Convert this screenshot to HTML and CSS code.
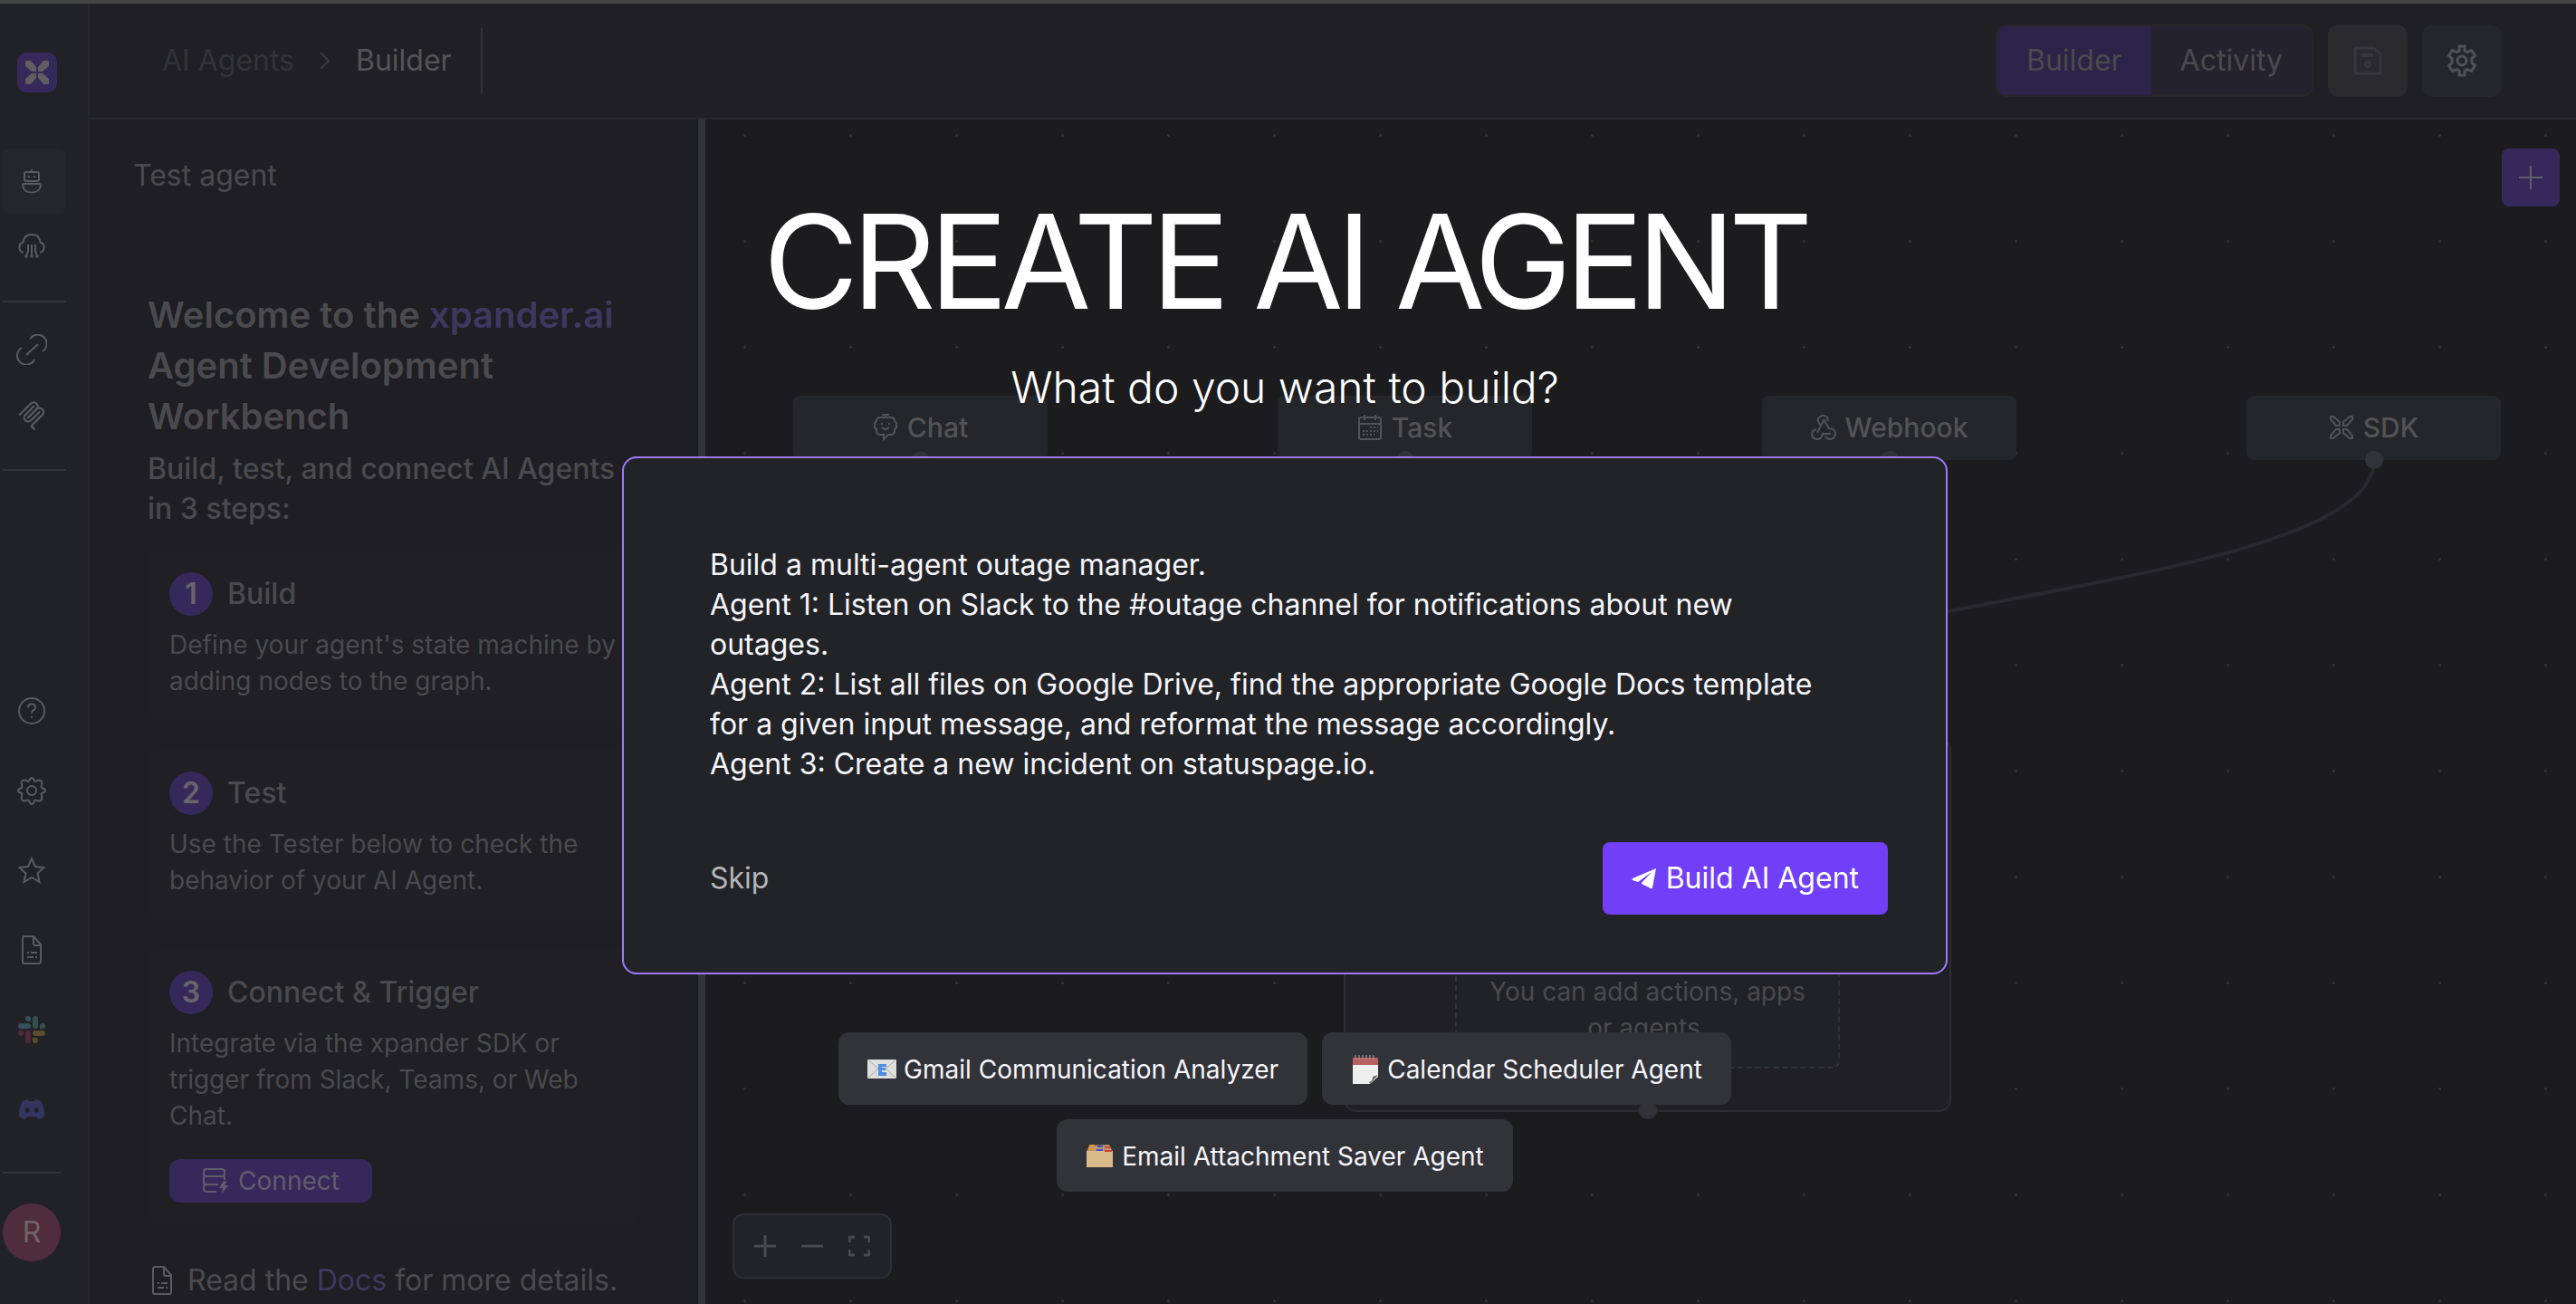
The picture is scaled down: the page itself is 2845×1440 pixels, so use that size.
FILE: index.html
```html
<!DOCTYPE html>
<html lang="en">
<head>
<meta charset="utf-8">
<title>xpander.ai – Builder</title>
<link rel="stylesheet" href="styles.css">
</head>
<body>
<svg class="defs" aria-hidden="true">
  <symbol id="i-doc" viewBox="0 0 24 32"><path d="M4 1h10l8 9v19a2 2 0 0 1-2 2H4a2 2 0 0 1-2-2V3a2 2 0 0 1 2-2zM14 1v8a2 2 0 0 0 2 2h6"/><path d="M7 19h2M11 19h7M7 24h7M16 24h2"/></symbol>
  <symbol id="i-plus" viewBox="0 0 24 24"><path d="M12 0v24M0 12h24"/></symbol>
</svg>

<div class="app">
  <nav class="sidebar" aria-label="Main">
    <a class="logo" href="#" aria-label="Home"><svg width="26" height="26" viewBox="0 0 26 26"><path d="M1 0h5l6 7v5H7L0 6V1q0-1 1-1zM25 0h-5l-6 7v5h5l7-6V1q0-1-1-1zM1 26h5l6-7v-5H7l-7 6v5q0 1 1 1zM25 26h-5l-6-7v-5h5l7 6v5q0 1-1 1z" fill="#5f5f62"/></svg></a>
    <div class="side-group">
      <a class="side-item active" href="#" aria-label="Agents"><svg class="ico" width="24" height="28" viewBox="0 0 24 28"><rect x="4" y="4" width="16" height="10" rx="2"/><path d="M12 1v3M9 8v2M15 8v2M4 17h16q2 0 2 1.500-1 8-10 8t-10-8Q2 17 4 17z"/></svg></a>
      <a class="side-item" href="#" aria-label="Cloud"><svg class="ico" width="34" height="30" viewBox="0 0 34 30"><path d="M8 22a6 6 0 0 1-.500-11.500q1-8.500 9.500-8.500t9.500 8.500A6 6 0 0 1 26 22M13 13v7l-2 6M17 13v13M21 13v7l2 6"/><path d="M9.500 26h3M15.500 26h3M21.500 26h3" stroke-width="3"/></svg></a>
    </div>
    <div class="side-group ruled">
      <a class="side-item" href="#" aria-label="Connectors"><svg class="ico" width="34" height="34" viewBox="0 0 34 34"><path d="M15 5.500A10 10 0 1 1 29 19M6 15a10 10 0 1 0 14 13M11 23 24 11"/></svg></a>
      <a class="side-item" href="#" aria-label="MCP"><svg class="ico mcp" width="36" height="36" viewBox="0 0 195 195"><path d="M25 97.850 92.880 29.970c9.370-9.370 24.570-9.370 33.940 0s9.370 24.570 0 33.940L75.560 115.180M76.270 114.470l50.550-50.560c9.380-9.370 24.570-9.370 33.950 0l.350.360c9.370 9.370 9.370 24.560 0 33.940L99.720 159.600c-3.120 3.120-3.120 8.190 0 11.310l12.610 12.610M109.850 46.940 59.650 97.150c-9.370 9.370-9.370 24.560 0 33.940s24.570 9.370 33.940 0l50.200-50.210"/></svg></a>
    </div>
    <div class="side-rule"></div>
    <div class="side-bottom">
      <a class="side-link" href="#" aria-label="Help"><svg class="ico" width="32" height="32" viewBox="0 0 32 32"><circle cx="16" cy="16" r="14"/><path d="M12 12.500q0-4 4-4t4 3.500q0 2.500-2.500 3.500-1.500 1-1.500 3M16 22v2"/></svg></a>
      <a class="side-link" href="#" aria-label="Settings"><svg class="ico" width="32" height="32" viewBox="0 0 32 32"><path d="M16 2q2 0 3 3.500 1 1 3-.500 3-1 4.500.500t.500 4.500q-1 2 0 3 4 1 4 3t-4 3q-1 1 0 3 1 3-.500 4.500t-4.500.500q-2-1-3 0-1 4-3 4t-3-4q-1-1-3 0-3 1-4.500-.500T5 22q1-2 0-3-4-1-4-3t4-3q1-1 0-3-1-3 .500-4.500T10 5q2 1.500 3 .500Q14 2 16 2z"/><circle cx="16" cy="16" r="5"/></svg></a>
      <a class="side-link" href="#" aria-label="Favorites"><svg class="ico" width="32" height="32" viewBox="0 0 32 32"><path d="m16 3 4 9 9.500 1-7 6.500 2 9.500-8.500-5-8.500 5 2-9.500-7-6.500 9.500-1z"/></svg></a>
      <a class="side-link" href="#" aria-label="Documents"><svg class="ico" width="24" height="32"><use href="#i-doc"/></svg></a>
      <a class="side-link" href="#" aria-label="Slack"><svg width="32" height="32" viewBox="0 0 32 32"><g fill="#354f5c"><rect x="1" y="9" width="14" height="6" rx="3"/><path d="M15 7h-3a3 3 0 1 1 3-3z"/></g><g fill="#34504a"><rect x="17" y="1" width="6" height="14" rx="3"/><path d="M25 15v-3a3 3 0 1 1 3 3z"/></g><g fill="#5c4c2f"><rect x="17" y="17" width="14" height="6" rx="3"/><path d="M17 25h3a3 3 0 1 1-3 3z"/></g><g fill="#512a3a"><rect x="9" y="17" width="6" height="14" rx="3"/><path d="M7 17v3a3 3 0 1 1-3-3z"/></g></svg></a>
      <a class="side-link" href="#" aria-label="Discord"><svg width="30" height="24" viewBox="0 0 30 24"><path fill="#33355f" fill-rule="evenodd" d="M5 3q3-2 6-2l1 2h6l1-2q3 0 6 2 5 9 4 17-4 3-7 3l-2-3H10l-2 3q-3 0-7-3Q0 12 5 3zM10 10a2.500 3 0 1 0 .1 0zM20 10a2.500 3 0 1 0 .1 0z"/></svg></a>
    </div>
    <button class="avatar" type="button">R</button>
  </nav>

  <div class="main">
    <header class="topbar">
      <div class="crumbs">
        <a class="crumb-parent" href="#">AI Agents</a>
        <svg class="crumb-sep" width="14" height="20" viewBox="0 0 14 20"><path d="m2 1 9 9-9 9"/></svg>
        <span class="crumb-current">Builder</span>
        <span class="crumb-bar"></span>
      </div>
      <div class="actions">
        <div class="tabs"><button class="tab on" type="button">Builder</button><button class="tab" type="button">Activity</button></div>
        <button class="square save" type="button" aria-label="Save"><svg width="32" height="32" viewBox="0 0 32 32"><path d="M4 2h19l7 7v19a2 2 0 0 1-2 2H4a2 2 0 0 1-2-2V4a2 2 0 0 1 2-2z"/><path d="M8 10h14" stroke-width="4"/><circle cx="16" cy="20" r="2.500"/></svg></button>
        <button class="square gear" type="button" aria-label="Settings"><svg width="36" height="36" viewBox="0 0 36 36"><path d="M15 2h6v5l3 1.500 4.500-2 4 6L29 15.500v5l3.500 3-4 6-4.500-2L21 29v5h-6v-5l-3-1.500-4.500 2-4-6L7 20.500v-5l-3.500-3 4-6 4.500 2L15 7z"/><circle cx="18" cy="18" r="5"/></svg></button>
      </div>
    </header>

    <div class="work">
      <section class="tester">
        <h2 class="tester-title">Test agent</h2>
        <div class="welcome">
          <h1>Welcome to the <a href="#">xpander.ai</a> Agent Development Workbench</h1>
          <h3>Build, test, and connect AI Agents in 3 steps:</h3>
          <ol class="steps">
            <li class="step"><div class="step-head"><span class="num">1</span><strong>Build</strong></div><p>Define your agent's state machine by adding nodes to the graph.</p></li>
            <li class="step"><div class="step-head"><span class="num">2</span><strong>Test</strong></div><p>Use the Tester below to check the behavior of your AI Agent.</p></li>
            <li class="step"><div class="step-head"><span class="num">3</span><strong>Connect &amp; Trigger</strong></div><p>Integrate via the xpander SDK or trigger from Slack, Teams, or Web Chat.</p>
              <button class="connect" type="button"><svg width="30" height="30" viewBox="0 0 30 30"><g fill="none" stroke="#605d6b" stroke-width="2"><rect x="2" y="2" width="23" height="8" rx="3"/><path d="M4 10q-2 0-2 2v4q0 3 3 3h13M25 14v-2q0-2-2-2M4 19q-2 0-2 3v2q0 3 3 3h11"/></g><path fill="#605d6b" d="m24 15-5 8h4l-1 6 7-9h-4l2-5z"/></svg>Connect</button></li>
          </ol>
          <p class="docs"><svg class="ico" width="24" height="32"><use href="#i-doc"/></svg><span>Read the <a href="#">Docs</a> for more details.</span></p>
        </div>
      </section>

      <section class="canvas">
        <svg class="edges" aria-hidden="true"><path d="M1843 376C1843 530 1041 530 1041 683"/></svg>
        <div class="node n-chat"><svg width="28" height="30" viewBox="0 0 28 30"><path d="M14 1v3M10 1h8M8 4h12q4 0 4 4l2 2v5l-2 2v2q0 4-4 4h-3l-5 5v-5H8q-4 0-4-4v-2l-2-2v-5l2-2q0-4 4-4zM10 10v2M18 10v2M10 15q4 4 8 0"/></svg>Chat</div>
        <div class="node n-task"><svg width="28" height="30" viewBox="0 0 28 30"><rect x="2" y="4" width="24" height="24" rx="2"/><path d="M2 11h24M8 1v6M20 1v6"/><path d="M14 15h9M6 19h17M6 23h13" stroke-dasharray="2 2"/></svg>Task</div>
        <div class="node n-hook"><svg width="28" height="30" viewBox="0 0 28 30"><path d="M10 12Q6 7 9 4q4-4 8-1 2 2 2 5M14 6l6 10q6 0 7 5 0 6-5 7-4 0-6-3M6 17q-5 1-5 6 1 5 6 5t6-6h9M14 7l-7 14"/></svg>Webhook</div>
        <div class="node n-sdk"><svg width="28" height="30" viewBox="0 0 28 30"><path d="M2 3h3l7 6v4H8L2 6zM26 3h-3l-7 6v4h4l6-7zM2 27h3l7-6v-4H8l-6 7zM26 27h-3l-7-6v-4h4l6 7z"/></svg>SDK</div>
        <div class="agent"><div class="drop">You can add actions, apps or agents.</div></div>
        <button class="add" type="button" aria-label="Add node"><svg width="26" height="26"><use href="#i-plus"/></svg></button>
        <div class="zoom">
          <button type="button" aria-label="Zoom in"><svg width="24" height="24"><use href="#i-plus"/></svg></button>
          <button type="button" aria-label="Zoom out"><svg width="24" height="24" viewBox="0 0 24 24"><path d="M0 12h24"/></svg></button>
          <button type="button" aria-label="Fit view"><svg width="24" height="24" viewBox="0 0 24 24"><path d="M1 8V4q0-2 2-2h4M17 2h4q2 0 2 2v4M23 16v4q0 2-2 2h-4M7 22H3q-2 0-2-2v-4"/></svg></button>
        </div>
      </section>
    </div>
  </div>
</div>

<div class="overlay" role="dialog" aria-labelledby="dlg-title">
  <h1 id="dlg-title">CREATE AI AGENT</h1>
  <label class="lead" for="prompt">What do you want to build?</label>
  <form class="card">
    <textarea id="prompt" rows="6" spellcheck="false">Build a multi-agent outage manager.
Agent 1: Listen on Slack to the #outage channel for notifications about new outages.
Agent 2: List all files on Google Drive, find the appropriate Google Docs template for a given input message, and reformat the message accordingly.
Agent 3: Create a new incident on statuspage.io.</textarea>
    <div class="card-foot">
      <button class="skip" type="button">Skip</button>
      <button class="build" type="button"><svg width="28" height="24" viewBox="0 0 28 24"><path fill="#fff" d="M27 1 1 12q-1 1 0 2l6 2L22 5 11 17v1l10 5q2 1 2-1z"/></svg>Build AI Agent</button>
    </div>
  </form>
  <div class="chips">
    <button class="chip" type="button"><svg width="32" height="24" viewBox="0 0 32 24"><rect y="1" width="32" height="21" fill="#dedede"/><path d="m0 1 12 10L0 22M32 1 20 11l12 11" fill="none" stroke="#aaa"/><path d="M12 6h9v3h-5v1h4v3h-4v2h5v4h-9z" fill="#4d8fe0"/></svg>Gmail Communication Analyzer</button>
    <button class="chip" type="button"><svg width="32" height="32" viewBox="0 0 32 32"><path fill="#eee" d="M2 4h28v20l-9 8H2z"/><path fill="#b9605e" d="M2 3h28v8H2z"/><path fill="#666" d="m30 22-9 10-1-2q5-2 4-6z"/><path d="M5 0v5M9 0v5M13 0v5M17 0v5M21 0v5M25 0v5" stroke="#aaa"/></svg>Calendar Scheduler Agent</button>
    <button class="chip" type="button"><svg width="32" height="32" viewBox="0 0 32 32"><path fill="#b8986b" d="m4 4 22-1 4 8H1z"/><path fill="#dab98a" d="M1 10h29v18H1z"/><path fill="#e8913a" d="M4 3h6v2H4zM3 7h7v2H3z"/><path fill="#3f51d0" d="M13 4h6v2h-6zM12 8h7v2h-7z"/><path fill="#d6403a" d="M21 5h6v2h-6zM21 9h8v2h-8z"/></svg>Email Attachment Saver Agent</button>
  </div>
</div>
</body>
</html>
```
FILE: styles.css
```css
* { box-sizing: border-box; }
body {
  margin: 0;
  background: #1c1c1e;
  color: #4a4a4e;
  font-family: Inter, "Liberation Sans", sans-serif;
  font-size: 32px;
  line-height: 44px;
}
h1, h2, h3, p, ol { margin: 0; padding: 0; }
button { margin: 0; padding: 0; border: 0; background: none; color: inherit; font: inherit; }
a { color: #3e3860; text-decoration: none; }
svg { display: block; flex: none; }
.defs { position: absolute; width: 0; height: 0; }
.ico { fill: none; stroke: #5b5b5e; stroke-width: 2; }
.mcp { stroke-width: 12; stroke-linecap: round; }

.app { display: flex; height: 100vh; overflow: hidden; border-top: 4px solid #444442; }

/* Sidebar */
.sidebar {
  display: flex;
  flex-direction: column;
  flex: none;
  width: 99px;
  padding: 54px 0 47px 3px;
  background: #212226;
  border-right: 2px solid #26262b;
}
.logo {
  display: grid;
  place-items: center;
  width: 44px;
  height: 44px;
  margin: 0 0 62px 16px;
  border-radius: 10px;
  background: #35295b;
}
.side-group { display: flex; flex-direction: column; width: 70px; }
.side-item { display: grid; place-items: center; height: 72px; padding-right: 6px; border-radius: 8px; }
.side-item.active { background: #25262a; }
.ruled { margin: 24px 0 8px; padding-top: 16px; border-top: 2px solid #323338; }
.side-rule { width: 70px; height: 2px; margin-top: 16px; background: #323338; }
.side-bottom {
  display: flex;
  flex-direction: column;
  width: 64px;
  margin-top: auto;
  padding-bottom: 25px;
  border-bottom: 2px solid #323338;
}
.side-link { display: grid; place-items: center; height: 88px; }
.avatar {
  width: 64px;
  height: 64px;
  margin-top: 33px;
  border-radius: 50%;
  background: #502d3b;
  color: #6f6468;
}

/* Top bar */
.main { display: flex; flex-direction: column; flex: 1; min-width: 0; }
.topbar {
  display: flex;
  align-items: center;
  justify-content: space-between;
  flex: none;
  height: 128px;
  padding: 0 82px 0 80px;
  background: #201f24;
  border-bottom: 2px solid #26272b;
}
.crumbs { display: flex; align-items: center; }
.crumb-parent { color: #323338; }
.crumb-sep { margin: 0 27px; fill: none; stroke: #3a3a3f; stroke-width: 2; }
.crumb-current { color: #545458; }
.crumb-bar { width: 2px; height: 72px; margin-left: 32px; background: #323338; }
.actions { display: flex; gap: 16px; }
.tabs { display: flex; overflow: hidden; height: 80px; border: 2px solid #26262b; border-radius: 12px; background: #24222c; }
.tab { padding: 0 32px; }
.tab.on { background: #2c2448; }
.square { display: grid; place-items: center; width: 88px; height: 80px; border-radius: 12px; }
.square svg { fill: none; stroke-width: 3; }
.save { background: #2a2a2d; }
.save svg { stroke: #37373b; }
.gear { background: #242629; }
.gear svg { stroke: #515154; }

/* Tester panel */
.work { display: flex; flex: 1; min-height: 0; }
.tester {
  flex: none;
  width: 680px;
  overflow: hidden;
  padding: 40px 0 0 48px;
  background: #1f1e23;
  border-right: 8px solid #333439;
}
.tester-title { font-size: 32px; font-weight: 400; }
.welcome { width: 544px; margin: 104px 0 0 16px; }
.welcome h1 { font-size: 40px; font-weight: 600; line-height: 56px; }
.welcome h3 { width: 530px; margin-top: 8px; font-size: 32px; font-weight: 500; }
.steps { display: flex; flex-direction: column; gap: 32px; margin-top: 24px; list-style: none; }
.step { padding: 24px; border-radius: 12px; background: #201f24; font-size: 28px; line-height: 40px; }
.step p { width: 500px; margin-top: 12px; }
.step-head { display: flex; align-items: center; gap: 16px; font-size: 32px; }
.step-head strong { font-weight: 500; }
.num {
  width: 48px;
  border-radius: 50%;
  background: #35295b;
  color: #66666a;
  font-weight: 600;
  line-height: 48px;
  text-align: center;
}
.connect {
  display: flex;
  align-items: center;
  justify-content: center;
  gap: 10px;
  width: 224px;
  height: 48px;
  margin-top: 28px;
  border-radius: 12px;
  background: #35295b;
  color: #605d6b;
}
.docs { display: flex; align-items: center; gap: 16px; margin-top: 40px; padding-left: 4px; white-space: nowrap; }

/* Canvas */
.canvas {
  position: relative;
  flex: 1;
  overflow: hidden;
  background: radial-gradient(circle, #323236 0 1px, transparent 2px) -15px -41px / 117px 117px;
}
.edges { position: absolute; inset: 0; width: 100%; height: 100%; fill: none; stroke: #29292d; stroke-width: 4; }
.node {
  position: absolute;
  top: 305px;
  display: flex;
  align-items: center;
  justify-content: center;
  gap: 10px;
  width: 281px;
  height: 71px;
  padding-bottom: 2px;
  border-radius: 8px;
  background: #25262a;
  color: #535356;
  font-size: 30px;
  font-weight: 500;
}
.node svg { fill: none; stroke: #535356; stroke-width: 2; }
.node::after, .agent::after {
  content: "";
  position: absolute;
  bottom: -10px;
  left: calc(50% - 10px);
  width: 20px;
  height: 20px;
  border-radius: 50%;
  background: #323338;
}
.n-chat { left: 97px; }
.n-task { left: 632px; }
.n-hook { left: 1167px; }
.n-sdk { left: 1702px; }
.agent {
  position: absolute;
  top: 683px;
  left: 705px;
  display: flex;
  width: 671px;
  height: 413px;
  padding: 60px 121px 46px;
  border: 2px solid #2d2c31;
  border-radius: 14px;
  background: #201f24;
}
.drop {
  display: flex;
  align-items: flex-end;
  justify-content: center;
  padding: 0 32px 23px;
  border: 2px dashed #323236;
  border-radius: 8px;
  background: #212226;
  color: #4a4a4e;
  font-size: 28px;
  line-height: 40px;
  text-align: center;
}
.add {
  position: absolute;
  top: 32px;
  right: 18px;
  display: grid;
  place-items: center;
  width: 64px;
  height: 64px;
  border-radius: 8px;
  background: #35295b;
}
.add svg { stroke: #5f5d69; stroke-width: 2; }
.zoom {
  position: absolute;
  bottom: 28px;
  left: 30px;
  display: flex;
  align-items: center;
  gap: 28px;
  height: 72px;
  padding: 0 22px;
  border: 2px solid #2d2e33;
  border-radius: 12px;
  background: #222327;
}
.zoom svg { fill: none; stroke: #4a4a4e; stroke-width: 3; }

/* Create dialog */
.overlay {
  position: absolute;
  inset: 0;
  display: flex;
  flex-direction: column;
  align-items: center;
  padding: 202px 7px 0 0;
  color: #fff;
}
.overlay h1 { font-size: 144px; font-weight: 400; line-height: 174px; letter-spacing: -0.05em; }
.lead { margin-top: 22px; font-size: 48px; font-weight: 300; line-height: 60px; }
.card {
  width: 1464px;
  max-width: 96%;
  margin-top: 46px;
  padding: 96px 64px 64px 95px;
  border: 2px solid #9f7aff;
  border-radius: 16px;
  background: #222327;
}
.card textarea {
  display: block;
  width: 1240px;
  max-width: 100%;
  height: 264px;
  padding: 0;
  border: 0;
  outline: 0;
  overflow: hidden;
  resize: none;
  background: none;
  color: #f5f5fa;
  font: 400 32px/44px Inter, "Liberation Sans", sans-serif;
}
.card-foot { display: flex; align-items: center; justify-content: space-between; margin-top: 64px; }
.skip { color: #b5b5ba; }
.build {
  display: flex;
  align-items: center;
  justify-content: center;
  gap: 10px;
  height: 80px;
  padding: 0 32px;
  border-radius: 8px;
  background: #703ff7;
  color: #fff;
}
.chips {
  display: flex;
  flex-wrap: wrap;
  justify-content: center;
  gap: 16px;
  width: 1140px;
  max-width: 96%;
  margin-top: 64px;
}
.chip {
  display: flex;
  align-items: center;
  gap: 8px;
  height: 80px;
  padding: 2px 32px 0;
  border-radius: 12px;
  background: #323338;
  color: #f5f5fa;
  font-size: 28px;
}
```
